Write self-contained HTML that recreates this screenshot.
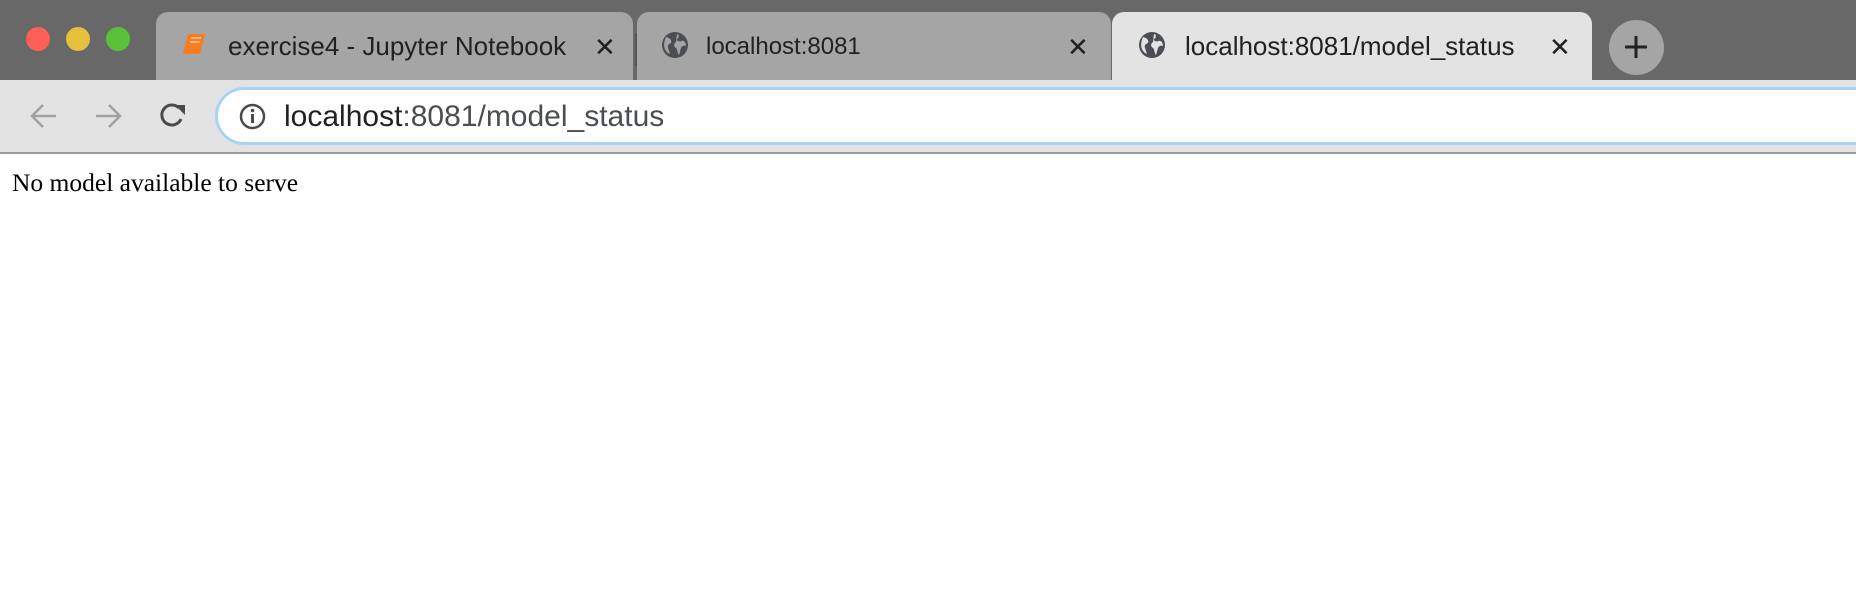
<!DOCTYPE html>
<html><head><style>
html,body{margin:0;padding:0;width:1856px;height:602px;overflow:hidden;background:#fff;}
.strip{position:absolute;left:0;top:0;width:1856px;height:80px;background:#686868;}
.dot{position:absolute;top:27px;width:24px;height:24px;border-radius:50%;}
.tab{position:absolute;top:12px;height:68px;border-radius:12px 12px 0 0;font-family:"Liberation Sans",sans-serif;font-size:26px;color:#202124;}
.tab span{position:absolute;top:19px;white-space:nowrap;}
.x{position:absolute;top:22px;font-size:26px;}
.tool{position:absolute;left:0;top:80px;width:1856px;height:72px;background:#e3e3e3;border-bottom:2px solid #9a9a9a;}
.omni{position:absolute;left:215px;top:87px;width:1700px;height:52px;border:3px solid #a6d4f5;border-radius:29px;background:#fff;}
.url{position:absolute;left:284px;top:100px;font-family:"Liberation Sans",sans-serif;font-size:30px;color:#4a4d52;white-space:nowrap;}
.page{position:absolute;left:12px;top:168px;font-family:"Liberation Serif",serif;font-size:25.5px;color:#000;white-space:nowrap;}
</style></head><body>
<div class="strip"></div>
<div class="dot" style="left:26px;background:#fe5f57"></div>
<div class="dot" style="left:66px;background:#e6bf3d"></div>
<div class="dot" style="left:106px;background:#5ac13b"></div>

<div class="tab" style="left:156px;width:477px;background:#a5a5a5">
<svg style="position:absolute;left:26px;top:21px" width="26" height="22" viewBox="0 0 26 22"><path d="M6 1h17l-4 16H2z" fill="#f57c20"/><path d="M2 17h17l-1 4H1z" fill="#f57c20"/><path d="M9 5h10M8 9h10" stroke="#fbb57a" stroke-width="2"/></svg>
<span style="left:72px">exercise4 - Jupyter Notebook</span><span class="x" style="left:438px;top:20px">✕</span></div>
<div style="position:absolute;left:635px;top:33px;width:2px;height:33px;background:#555"></div>
<div class="tab" style="left:637px;width:474px;background:#a5a5a5">
<svg style="position:absolute;left:24px;top:19px" width="28" height="28" viewBox="0 0 28 28"><circle cx="14" cy="14" r="13" fill="#4a4d52"/><path d="M5 6c4 1 6 3 5 6-2 1-4 2-3 5l2 6c-5-2-8-8-4-17zM16 3c3 1 2 4 0 5-1 2 3 3 5 2s4 2 4 5c-2-1-4 0-5 2l-2 7c-2-2-1-5-3-7-2-1-3-4 0-6z" fill="#a5a5a5"/></svg>
<span style="left:69px;font-size:24px;top:21px">localhost:8081</span><span class="x" style="left:430px;top:20px">✕</span></div>
<div class="tab" style="left:1112px;width:480px;background:#e3e3e3">
<svg style="position:absolute;left:26px;top:19px" width="28" height="28" viewBox="0 0 28 28"><circle cx="14" cy="14" r="13" fill="#4a4d52"/><path d="M5 6c4 1 6 3 5 6-2 1-4 2-3 5l2 6c-5-2-8-8-4-17zM16 3c3 1 2 4 0 5-1 2 3 3 5 2s4 2 4 5c-2-1-4 0-5 2l-2 7c-2-2-1-5-3-7-2-1-3-4 0-6z" fill="#e3e3e3"/></svg>
<span style="left:73px">localhost:8081/model_status</span><span class="x" style="left:437px;top:20px">✕</span></div>
<div style="position:absolute;left:1609px;top:20px;width:55px;height:55px;border-radius:50%;background:#a5a5a5"></div>
<svg style="position:absolute;left:1624px;top:35px" width="24" height="24"><path d="M12 1v22M1 12h22" stroke="#222" stroke-width="3"/></svg>

<div class="tool"></div>
<svg style="position:absolute;left:30px;top:103px" width="28" height="26"><path d="M26 13H3M13 2L2 13l11 11" stroke="#a0a0a0" stroke-width="2.5" fill="none"/></svg>
<svg style="position:absolute;left:94px;top:103px" width="28" height="26"><path d="M2 13h23M15 2l11 11-11 11" stroke="#a0a0a0" stroke-width="2.5" fill="none"/></svg>
<svg style="position:absolute;left:158px;top:101px" width="30" height="30"><path d="M23 18A10 10 0 1 1 21 7" stroke="#4a4a4a" stroke-width="3" fill="none"/><path d="M17 4h10v10z" fill="#4a4a4a"/></svg>
<div class="omni"></div>
<svg style="position:absolute;left:239px;top:103px" width="27" height="27"><circle cx="13.5" cy="13.5" r="11.5" stroke="#4a4a4a" stroke-width="2.5" fill="none"/><rect x="12" y="11" width="3" height="9" fill="#4a4a4a"/><circle cx="13.5" cy="7.5" r="1.8" fill="#4a4a4a"/></svg>
<div class="url"><span style="color:#202124">localhost</span>:8081/model_status</div>
<div class="page">No model available to serve</div>
</body></html>
